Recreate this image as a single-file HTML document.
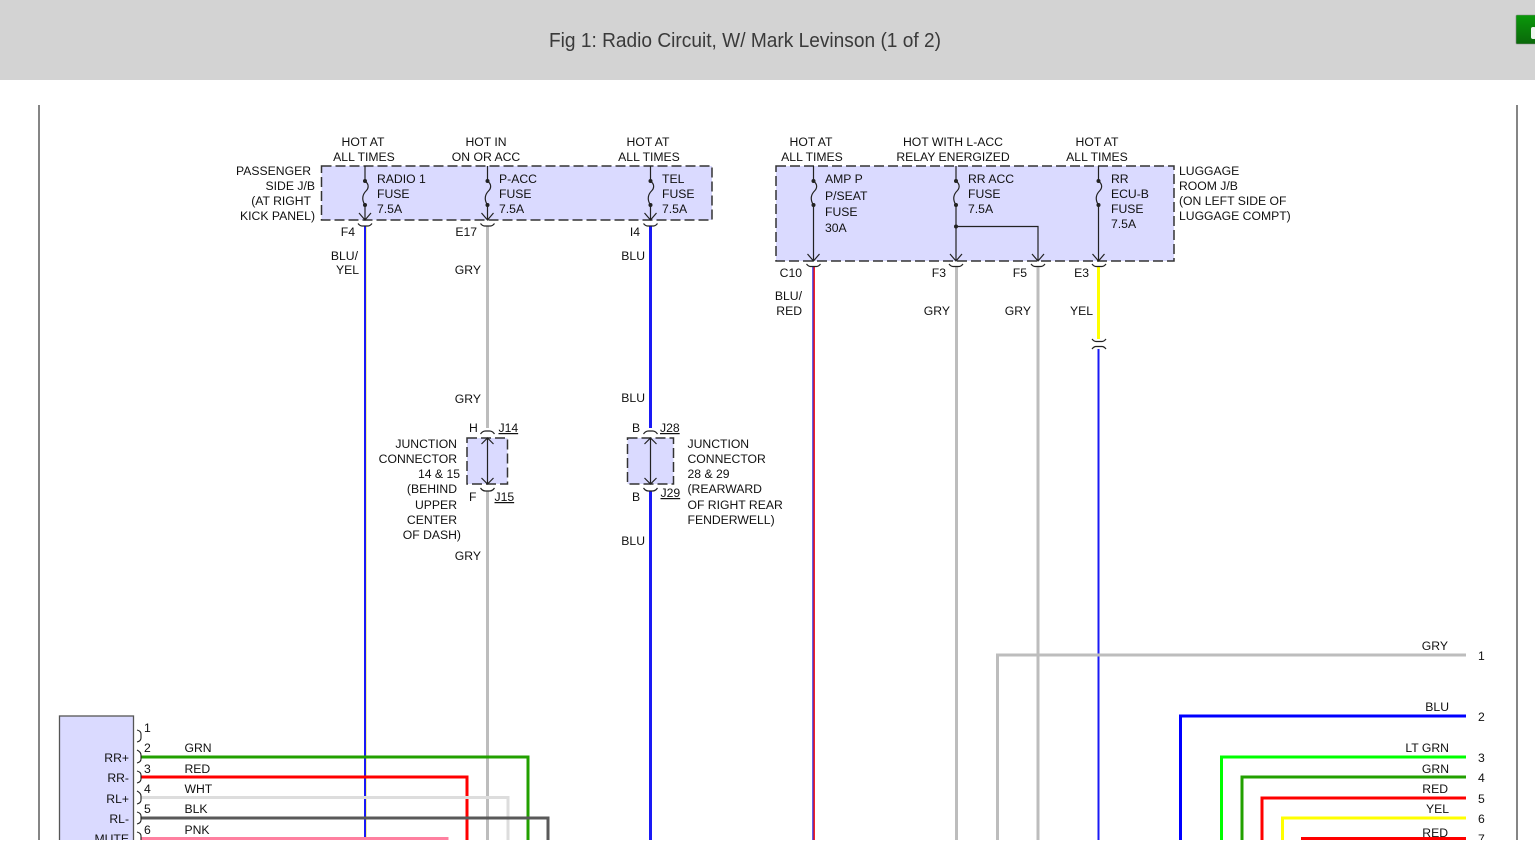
<!DOCTYPE html>
<html><head><meta charset="utf-8"><title>Fig 1</title>
<style>
html,body{margin:0;padding:0;background:#fff;width:1535px;height:866px;overflow:hidden}
svg{display:block;position:absolute;left:0;top:0}
text{font-family:"Liberation Sans",Arial,sans-serif;font-size:12.2px;fill:#111}
.e{text-anchor:end}.m{text-anchor:middle}
.u{text-decoration:underline}
.t{font-size:20px;fill:#3a3a3a}
</style></head><body>
<svg width="1535" height="866" viewBox="0 0 1535 866" xmlns="http://www.w3.org/2000/svg">
<defs><linearGradient id="g" x1="0" y1="0" x2="0" y2="1"><stop offset="0" stop-color="#0a980a"/><stop offset="1" stop-color="#0a680a"/></linearGradient></defs>
<rect x="0" y="0" width="1535" height="80" fill="#d3d3d3"/>
<text class="t" x="549" y="47" textLength="392" lengthAdjust="spacingAndGlyphs">Fig 1: Radio Circuit, W/ Mark Levinson (1 of 2)</text>
<rect x="1516" y="15" width="20" height="29" rx="1" fill="url(#g)" stroke="#888" stroke-width="0.6"/>
<rect x="1531" y="27" width="5" height="12" rx="2" fill="#eef5ee"/>

<g fill="none">
<rect x="38" y="105" width="2" height="735" fill="#858585"/>
<rect x="1516" y="105" width="2" height="735" fill="#858585"/>

<!-- boxes -->
<rect x="321.500" y="166" width="390.500" height="54" fill="#dadaff" stroke="#333" stroke-width="1.500" stroke-dasharray="10 4"/>
<rect x="776" y="166" width="398" height="95" fill="#dadaff" stroke="#333" stroke-width="1.500" stroke-dasharray="10 4"/>
<rect x="467" y="438" width="40.500" height="46" fill="#dadaff" stroke="#333" stroke-width="1.500" stroke-dasharray="10 4"/>
<rect x="627.500" y="438" width="46" height="46" fill="#dadaff" stroke="#333" stroke-width="1.500" stroke-dasharray="10 4"/>
<rect x="59.500" y="716" width="74" height="130" fill="#dadaff" stroke="#555" stroke-width="1.300"/>

<!-- vertical wires -->
<path d="M365 226V840" stroke="#1a1af5" stroke-width="2"/>
<path d="M366.500 226V840" stroke="#f4f0a0" stroke-width="1"/>
<path d="M487.500 226V428M487.500 491V840" stroke="#bdbdbd" stroke-width="3"/>
<path d="M650.500 226V428M650.500 491V840" stroke="#1a1af5" stroke-width="3"/>
<path d="M813 267V840" stroke="#3030e0" stroke-width="1.500"/>
<path d="M814.200 267V840" stroke="#f01818" stroke-width="1.500"/>
<path d="M956.500 267V840M1038 267V840" stroke="#bdbdbd" stroke-width="3"/>
<path d="M1098.500 267V339" stroke="#ffff00" stroke-width="3"/>
<path d="M1098.500 349V840" stroke="#1a1af5" stroke-width="2"/>

<!-- right harness -->
<path d="M1466 655H997.500V840" stroke="#bdbdbd" stroke-width="3"/>
<path d="M1466 716H1180.500V840" stroke="#0000ff" stroke-width="3"/>
<path d="M1466 757H1221.500V840" stroke="#00ff00" stroke-width="3"/>
<path d="M1466 777H1242V840" stroke="#22a000" stroke-width="3"/>
<path d="M1466 798H1262V840" stroke="#ff0000" stroke-width="3"/>
<path d="M1466 818H1282.500V840" stroke="#ffff00" stroke-width="3"/>
<path d="M1466 838.500H1302.500V840" stroke="#ff0000" stroke-width="3"/>

<!-- left harness -->
<path d="M141 757H528V840" stroke="#22a000" stroke-width="3"/>
<path d="M141 777H467V840" stroke="#ff0000" stroke-width="3"/>
<path d="M141 797.500H508V840" stroke="#dddddd" stroke-width="3"/>
<path d="M141 818H548V840" stroke="#595959" stroke-width="3"/>
<path d="M141 838.500H447V840" stroke="#ff80a0" stroke-width="3"/>

<!-- pin brackets -->
<g stroke="#222" stroke-width="1.100">
<path d="M137 730q4 1 4 4v4q0 3-4 4"/>
<path d="M137 750q4 2 4 5v4q0 3-4 4"/>
<path d="M137 771q4 1 4 4v4q0 3-4 4"/>
<path d="M137 791q4 2 4 5v4q0 3-4 4"/>
<path d="M137 812q4 1 4 4v4q0 3-4 4"/>
<path d="M137 832q4 1 4 4v4"/>
</g>

<!-- fuses -->
<g stroke="#222" stroke-width="1.200">
<path d="M365 166V181c4 3 4 7 1 10c-3 3-5 8-1 14V220M359 213l6 7 6-7"/>
<path d="M487.500 166V181c4 3 4 7 1 10c-3 3-5 8-1 14V220M481.500 213l6 7 6-7"/>
<path d="M650.500 166V181c4 3 4 7 1 10c-3 3-5 8-1 14V220M644.500 213l6 7 6-7"/>
<path d="M813.500 166V181c4 3 4 7 1 10c-3 3-5 8-1 14V261M807.500 254l6 7 6-7"/>
<path d="M956 166V181c4 3 4 7 1 10c-3 3-5 8-1 14V261M950 254l6 7 6-7"/>
<path d="M956 226.500H1038V261M1032 254l6 7 6-7"/>
<path d="M1098.500 166V181c4 3 4 7 1 10c-3 3-5 8-1 14V261M1092.500 254l6 7 6-7"/>
<!-- connector arcs below boxes -->
<path d="M358 223.500q2 2.500 4 2.500h6q2 0 4-2.500"/>
<path d="M480.500 223.500q2 2.500 4 2.500h6q2 0 4-2.500"/>
<path d="M643.500 223.500q2 2.500 4 2.500h6q2 0 4-2.500"/>
<path d="M806.500 264q2 2.500 4 2.500h6q2 0 4-2.500"/>
<path d="M949 264q2 2.500 4 2.500h6q2 0 4-2.500"/>
<path d="M1031 264q2 2.500 4 2.500h6q2 0 4-2.500"/>
<path d="M1092 264q2 2.500 4 2.500h6q2 0 4-2.500"/>
<!-- inline connector -->
<path d="M1092 339q2 2.500 4 2.500h6q2 0 4-2.500"/>
<path d="M1092 349q2-2.500 4-2.500h6q2 0 4 2.500"/>
<!-- junctions -->
<path d="M480.500 434q2-3 5-3h4q3 0 5 3"/>
<path d="M480.500 488q2 3 5 3h4q3 0 5-3"/>
<path d="M643.500 434q2-3 5-3h4q3 0 5 3"/>
<path d="M643.500 488q2 3 5 3h4q3 0 5-3"/>
<path d="M487.500 438V484M481.500 444l6-6 6 6M481.500 478l6 6 6-6"/>
<path d="M650.500 438V484M644.500 444l6-6 6 6M644.500 478l6 6 6-6"/>
</g>
<g fill="#222">
<circle cx="365" cy="181" r="2"/><circle cx="365" cy="205" r="2"/>
<circle cx="487.500" cy="181" r="2"/><circle cx="487.500" cy="205" r="2"/>
<circle cx="650.500" cy="181" r="2"/><circle cx="650.500" cy="205" r="2"/>
<circle cx="813.500" cy="181" r="2"/><circle cx="813.500" cy="205" r="2"/>
<circle cx="956" cy="181" r="2"/><circle cx="956" cy="205" r="2"/><circle cx="956" cy="226.500" r="2"/>
<circle cx="1098.500" cy="181" r="2"/><circle cx="1098.500" cy="205" r="2"/>
</g>
</g>

<!-- Top labels -->
<text class="m" x="363" y="146">HOT AT</text><text class="m" x="364" y="161">ALL TIMES</text>
<text class="m" x="486" y="146">HOT IN</text><text class="m" x="486" y="161">ON OR ACC</text>
<text class="m" x="648" y="146">HOT AT</text><text class="m" x="649" y="161">ALL TIMES</text>
<text class="m" x="811" y="146">HOT AT</text><text class="m" x="812" y="161">ALL TIMES</text>
<text class="m" x="953" y="146">HOT WITH L-ACC</text><text class="m" x="953" y="161">RELAY ENERGIZED</text>
<text class="m" x="1097" y="146">HOT AT</text><text class="m" x="1097" y="161">ALL TIMES</text>

<text class="e" x="311" y="175">PASSENGER</text>
<text class="e" x="315" y="190">SIDE J/B</text>
<text class="e" x="311" y="205">(AT RIGHT</text>
<text class="e" x="315" y="220">KICK PANEL)</text>

<text x="377" y="183">RADIO 1</text><text x="377" y="198">FUSE</text><text x="377" y="213">7.5A</text>
<text x="499" y="183">P-ACC</text><text x="499" y="198">FUSE</text><text x="499" y="213">7.5A</text>
<text x="662" y="183">TEL</text><text x="662" y="198">FUSE</text><text x="662" y="213">7.5A</text>
<text x="825" y="183">AMP P</text><text x="825" y="200">P/SEAT</text><text x="825" y="216">FUSE</text><text x="825" y="232">30A</text>
<text x="968" y="183">RR ACC</text><text x="968" y="198">FUSE</text><text x="968" y="213">7.5A</text>
<text x="1111" y="183">RR</text><text x="1111" y="198">ECU-B</text><text x="1111" y="213">FUSE</text><text x="1111" y="228">7.5A</text>

<text x="1179" y="175">LUGGAGE</text><text x="1179" y="190">ROOM J/B</text><text x="1179" y="205">(ON LEFT SIDE OF</text><text x="1179" y="220">LUGGAGE COMPT)</text>

<text class="e" x="355" y="236">F4</text>
<text class="e" x="477" y="236">E17</text>
<text class="e" x="640" y="236">I4</text>
<text class="e" x="802" y="277">C10</text>
<text class="e" x="946" y="277">F3</text>
<text class="e" x="1027" y="277">F5</text>
<text class="e" x="1089" y="277">E3</text>

<text class="e" x="358" y="260">BLU/</text><text class="e" x="359" y="274">YEL</text>
<text class="e" x="481" y="274">GRY</text>
<text class="e" x="645" y="260">BLU</text>
<text class="e" x="802" y="300">BLU/</text><text class="e" x="802" y="315">RED</text>
<text class="e" x="950" y="315">GRY</text>
<text class="e" x="1031" y="315">GRY</text>
<text class="e" x="1093" y="315">YEL</text>

<text class="e" x="481" y="403">GRY</text>
<text class="e" x="645" y="402">BLU</text>
<text class="e" x="481" y="560">GRY</text>
<text class="e" x="645" y="545">BLU</text>

<text x="469" y="432">H</text><text class="u" x="498.500" y="432">J14</text>
<text x="469" y="501">F</text><text class="u" x="494.500" y="501">J15</text>
<text x="632" y="432">B</text><text class="u" x="660" y="432">J28</text>
<text x="632" y="501">B</text><text class="u" x="660.500" y="497">J29</text>

<text class="e" x="457" y="448">JUNCTION</text>
<text class="e" x="457" y="463">CONNECTOR</text>
<text class="e" x="460" y="478">14 &amp; 15</text>
<text class="e" x="457" y="493">(BEHIND</text>
<text class="e" x="457" y="509">UPPER</text>
<text class="e" x="457" y="524">CENTER</text>
<text class="e" x="461" y="539">OF DASH)</text>

<text x="687.500" y="448">JUNCTION</text>
<text x="687.500" y="463">CONNECTOR</text>
<text x="687.500" y="478">28 &amp; 29</text>
<text x="687.500" y="493">(REARWARD</text>
<text x="687.500" y="509">OF RIGHT REAR</text>
<text x="687.500" y="524">FENDERWELL)</text>

<!-- left component -->
<text x="144" y="732">1</text>
<text x="144" y="752">2</text><text x="184.500" y="752">GRN</text>
<text x="144" y="773">3</text><text x="184.500" y="773">RED</text>
<text x="144" y="793">4</text><text x="184.500" y="793">WHT</text>
<text x="144" y="813">5</text><text x="184.500" y="813">BLK</text>
<text x="144" y="834">6</text><text x="184.500" y="834">PNK</text>
<text class="e" x="129" y="762">RR+</text>
<text class="e" x="129" y="782">RR-</text>
<text class="e" x="129" y="803">RL+</text>
<text class="e" x="129" y="823">RL-</text>
<text class="e" x="129" y="843">MUTE</text>

<!-- right labels -->
<text class="e" x="1448" y="650">GRY</text>
<text class="e" x="1449" y="711">BLU</text>
<text class="e" x="1449" y="752">LT GRN</text>
<text class="e" x="1449" y="773">GRN</text>
<text class="e" x="1448" y="793">RED</text>
<text class="e" x="1449" y="813">YEL</text>
<text class="e" x="1448" y="837">RED</text>
<text x="1478" y="660">1</text>
<text x="1478" y="721">2</text>
<text x="1478" y="762">3</text>
<text x="1478" y="782">4</text>
<text x="1478" y="803">5</text>
<text x="1478" y="823">6</text>
<text x="1478" y="843">7</text>

<!-- clip bottom -->
<rect x="0" y="840" width="1535" height="26" fill="#fff"/>
</svg>
</body></html>
